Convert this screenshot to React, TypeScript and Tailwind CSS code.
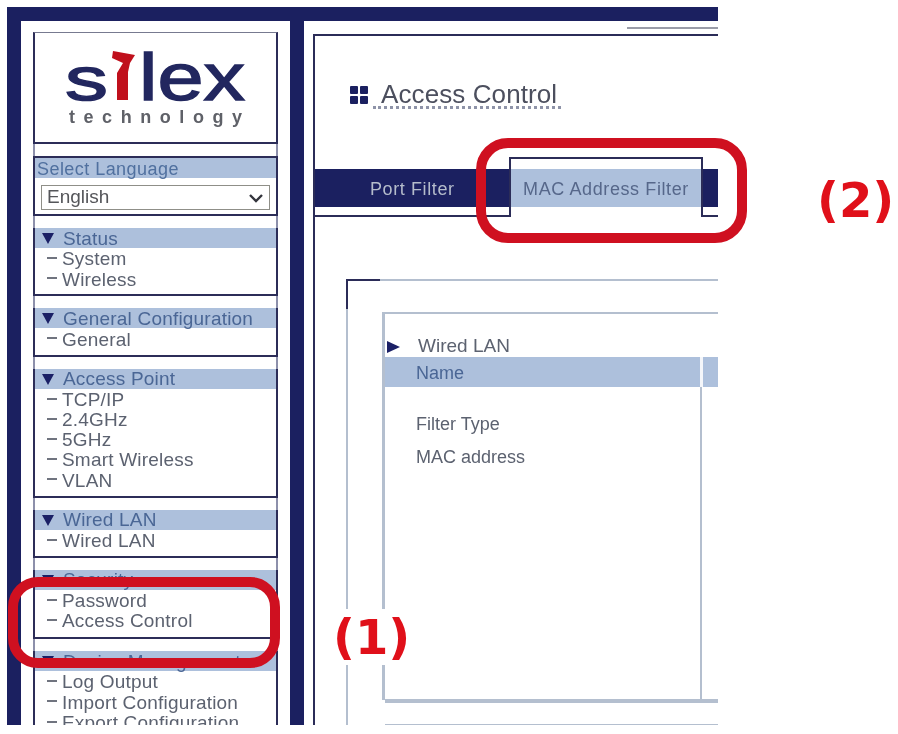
const font = { fontFamily: '"Liberation Sans", "Noto Sans", sans-serif' };

function Tri() {
  return (
    <svg width="12" height="12" viewBox="0 0 12 12" className="shrink-0">
      <path d="M0 1H12L6 12Z" fill="#1b2066" />
    </svg>
  );
}

function Head({ label }: { label: string }) {
  return (
    <div className="flex h-[20px] items-center gap-[9px] bg-[#adc0dc] pl-[7px] text-[19px] text-[#4a6695]">
      <Tri />
      <span className="whitespace-nowrap pt-[2px] tracking-[0.2px]">{label}</span>
    </div>
  );
}

function Row({ label }: { label: string }) {
  return (
    <div className="flex h-[20.2px] items-center gap-[5px] pl-[12px] text-[19px] text-[#5c6270]">
      <span className="h-[2px] w-[10px] shrink-0 bg-[#70747f]" />
      <span className="whitespace-nowrap pt-[3px] tracking-[0.2px]">{label}</span>
    </div>
  );
}

function Section({ title, items, pb }: { title: string; items: string[]; pb: string }) {
  return (
    <section className={`-mx-[2px] mt-[12px] border-x-2 border-b-2 border-[#2c2d58] ${pb}`}>
      <Head label={title} />
      {items.map((i) => (
        <Row key={i} label={i} />
      ))}
    </section>
  );
}

function Logo() {
  return (
    <svg width="240" height="109" viewBox="0 0 240 109" className="block">
      <text x="30" y="67" fontFamily="Liberation Sans" fontSize="62" fill="#22275f" stroke="#22275f" strokeWidth="1.4" textLength="43" lengthAdjust="spacingAndGlyphs">s</text>
      <path d="M78 18L100 22L95 30L93 39V67H82V40L88 30L77 25Z" fill="#c0101c" />
      <text x="104" y="67" fontFamily="Liberation Sans" fontSize="67" fill="#22275f" stroke="#22275f" strokeWidth="1.4" textLength="106" lengthAdjust="spacingAndGlyphs">lex</text>
      <text x="34" y="90" fontFamily="Liberation Sans" fontWeight="700" fontSize="18" fill="#5f6168" textLength="173">technology</text>
    </svg>
  );
}

export default function App() {
  return (
    <div className="relative h-[734px] w-[898px] overflow-hidden bg-white blur-[0.7px]" style={font}>
      <div className="ml-[7px] mt-[7px] flex h-[718px] w-[711px] flex-col overflow-hidden bg-white">
        <div className="h-[14px] shrink-0 bg-[#1b2060]" />
        <div className="flex min-h-0 flex-1">
          <div className="w-[14px] shrink-0 bg-[#1b2060]" />
          {/* sidebar */}
          <aside className="h-full w-[269px] shrink-0 overflow-hidden px-[12px] pt-[11px]">
            <div className="border-x-2 border-[#8d90ab]">
              <div className="-mx-[2px] border-x-2 border-b-2 border-[#2c2d58] border-t border-t-[#777a90]">
                <Logo />
              </div>
              <section className="-mx-[2px] mt-[12px] h-[60px] border-x-2 border-y-2 border-[#2c2d58]">
                <div className="flex h-[20px] items-center whitespace-nowrap bg-[#adc0dc] pl-[2px] pt-[3px] text-[18px] tracking-[0.45px] text-[#50709f]">
                  Select Language
                </div>
                <div className="mx-[6px] mt-[7px] flex h-[25px] items-center justify-between border border-[#8f8f88] pl-[5px] pr-[5px] text-[19px] text-[#55565a]">
                  <span>English</span>
                  <svg width="16" height="10" viewBox="0 0 16 10">
                    <path d="M2 2L8 8L14 2" fill="none" stroke="#33343c" strokeWidth="2.4" />
                  </svg>
                </div>
              </section>
              <Section title="Status" items={["System", "Wireless"]} pb="pb-[6px]" />
              <Section title="General Configuration" items={["General"]} pb="pb-[6px]" />
              <Section title="Access Point" items={["TCP/IP", "2.4GHz", "5GHz", "Smart Wireless", "VLAN"]} pb="pb-[6px]" />
              <Section title="Wired LAN" items={["Wired LAN"]} pb="pb-[6px]" />
              <Section title="Security" items={["Password", "Access Control"]} pb="pb-[7px]" />
              <Section title="Device Management" items={["Log Output", "Import Configuration", "Export Configuration"]} pb="pb-[7px]" />
            </div>
          </aside>
          <div className="w-[14px] shrink-0 bg-[#1b2060]" />
          {/* main */}
          <main className="min-w-0 flex-1 pl-[9px]">
            <div className="ml-auto mt-[6px] h-[2px] w-[91px] bg-[#9a9ca8]" />
            <div className="mt-[5px] h-full border-l-2 border-t-2 border-[#2b2c58]">
              <div className="flex h-[74px] items-end pb-[1px] pl-[35px]">
                <div className="mb-[5px] grid h-[18px] w-[18px] grid-cols-2 gap-[2px]">
                  <span className="rounded-[1px] bg-[#1b2060]" />
                  <span className="rounded-[1px] bg-[#1b2060]" />
                  <span className="rounded-[1px] bg-[#1b2060]" />
                  <span className="rounded-[1px] bg-[#1b2060]" />
                </div>
                <div className="ml-[5px] flex h-[28px] w-[188px] items-center whitespace-nowrap border-b-[3px] border-dotted border-[#8e93a8] pl-[8px] text-[26px] leading-none tracking-[0.1px] text-[#4c4f5e]">
                  Access Control
                </div>
              </div>
              {/* tabs */}
              <div className="relative mt-[59px] h-[38px] bg-[#1b2060] text-[18px] tracking-[0.6px]">
                <div className="flex h-full items-center pl-[55px] pt-[3px] text-[#b5bccb]">Port Filter</div>
                <div className="absolute bottom-[-9px] left-[194px] top-[-12px] w-[194px] border-x-2 border-t-2 border-[#2b2c58] bg-white">
                  <div className="mt-[10px] flex h-[38px] items-center justify-center whitespace-nowrap bg-[#adc0dc] pt-[3px] text-[#56678a]">
                    MAC Address Filter
                  </div>
                </div>
              </div>
              <div className="mt-[8px] flex h-[2px]">
                <div className="w-[196px] bg-[#2b2c58]" />
                <div className="w-[190px]" />
                <div className="flex-1 bg-[#2b2c58]" />
              </div>
              {/* panel */}
              <div className="ml-[31px] mt-[62px] h-[480px] border-l-2 border-t-2 border-[#b4bfcf]">
                <div className="relative">
                  <div className="absolute -left-[2px] -top-[2px] h-[30px] w-[34px] border-l-2 border-t-2 border-[#2b2c58]" />
                </div>
                <div className="ml-[34px] mt-[31px] h-[388px] border-l-[3px] border-t-2 border-[#b4bfcf]">
                  <div className="flex h-[43px] items-center pt-[22px] text-[19px] text-[#5c6270]">
                    <svg width="13" height="12" viewBox="0 0 13 12" className="ml-[2px]">
                      <path d="M0 0L13 6L0 12Z" fill="#1b2066" />
                    </svg>
                    <span className="ml-[18px]">Wired LAN</span>
                  </div>
                  <div className="flex h-[30px] text-[18px]">
                    <div className="flex w-[315px] items-center bg-[#adc0dc] pl-[31px] pt-[3px] text-[#4a6695]">Name</div>
                    <div className="flex-1 border-l-[3px] border-[#f4f6fa] bg-[#adc0dc]" />
                  </div>
                  <div className="h-[312px] w-[317px] border-r-2 border-[#b4bfcf] pl-[31px] text-[18px] text-[#5c6270]">
                    <div className="pt-[25px] leading-[24px]">Filter Type</div>
                    <div className="pt-[9px] leading-[24px]">MAC address</div>
                  </div>
                  <div className="h-[4px] bg-[#b4bfcf]" />
                  <div className="mt-[21px] h-[1px] bg-[#b4bfcf]" />
                </div>
              </div>
            </div>
          </main>
        </div>
      </div>
      {/* annotations */}
      <div className="absolute left-[8px] top-[577px] h-[91px] w-[272px] rounded-[30px] border-[10px] border-[#cf1020]" />
      <div className="absolute left-[476px] top-[138px] h-[105px] w-[271px] rounded-[32px] border-[10px] border-[#cf1020]" />
      <div className="absolute left-[329px] top-[609px] bg-white px-[4px] text-[48px] font-bold leading-[56px] text-[#e0101a]" style={{ fontFamily: '"DejaVu Sans", sans-serif' }}>(1)</div>
      <div className="absolute left-[817px] top-[172px] text-[48px] font-bold leading-[56px] text-[#e0101a]" style={{ fontFamily: '"DejaVu Sans", sans-serif' }}>(2)</div>
    </div>
  );
}
